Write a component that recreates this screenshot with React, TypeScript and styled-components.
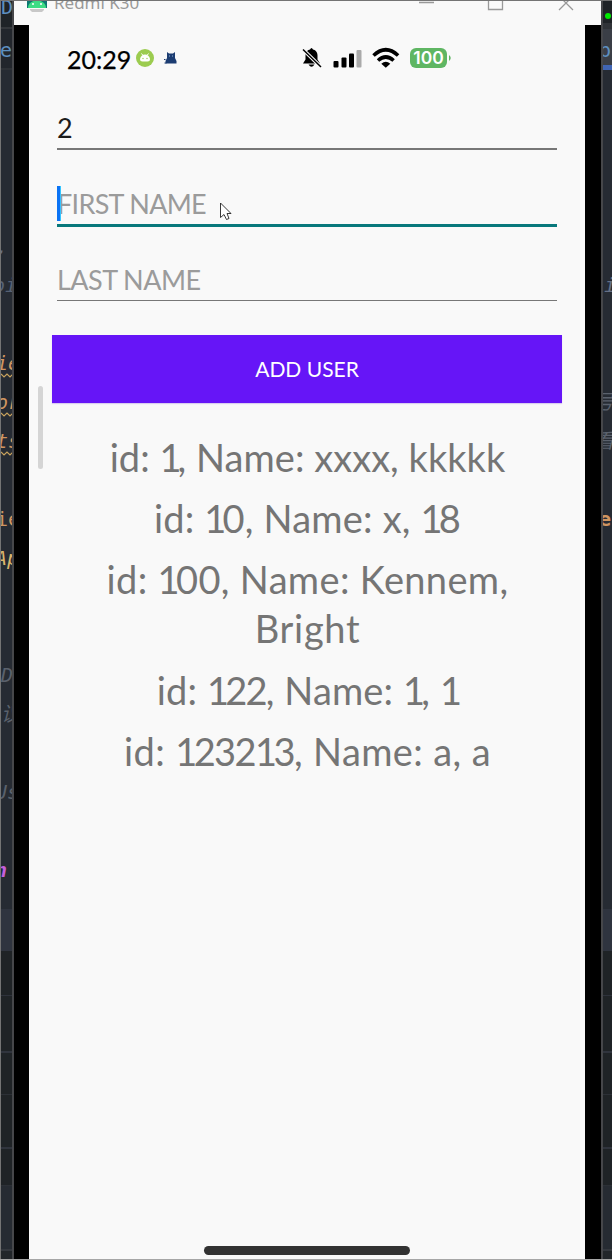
import React from 'react';
import styled, { createGlobalStyle } from 'styled-components';

const Global = createGlobalStyle`
  * { box-sizing: border-box; }
  html, body { margin: 0; background: #252a33; }
  body { font-family: Lato, "Noto Sans", "Noto Sans CJK SC", sans-serif; overflow: hidden; }
`;

const Screen = styled.div`
  display: grid;
  grid-template-columns: 14px 587px 11px;
  width: 612px;
  height: 1260px;
  overflow: hidden;
  border-top: 1px solid #747474;
  border-bottom: 1px solid #a6a6a6;
`;

const Editor = styled.div<{ $side: 'left' | 'right' }>`
  display: flex;
  flex-direction: column;
  height: 1258px;
  overflow: hidden;
  background: #262b33;
  border-left: ${p => (p.$side === 'left' ? '1px solid #747474' : '2px solid #46474a')};
  border-right: ${p => (p.$side === 'left' ? '2px solid #46474a' : '0')};
`;

const Band = styled.div<{ $h: number; $bg: string; $line?: string; $lineW?: number; $top?: number; $bottom?: number }>`
  display: flex;
  align-items: center;
  flex: none;
  height: ${p => p.$h}px;
  padding: ${p => p.$top || 0}px 0 ${p => p.$bottom || 0}px;
  overflow: hidden;
  background: ${p => p.$bg};
  border-bottom: ${p => (p.$line ? `${p.$lineW || 2}px solid ${p.$line}` : '0')};
`;

const CodeArea = styled.div`
  flex: none;
  height: 839px;
  overflow: hidden;
`;

const CodeLine = styled.div`
  display: flex;
  flex-direction: column;
  justify-content: center;
  height: 39px;
  overflow: hidden;
`;

const Code = styled.span<{ $shift: number; $c: string; $italic?: boolean; $bold?: boolean }>`
  margin-left: ${p => p.$shift}px;
  color: ${p => p.$c};
  font: ${p => (p.$italic ? 'italic' : 'normal')} ${p => (p.$bold ? 700 : 400)} 20px/26px "DejaVu Sans Mono", "Noto Sans CJK SC", monospace;
  white-space: pre;
`;

const Squiggle = styled.svg`
  display: block;
  margin: -3px 0 -2px;
`;

const StatusDot = styled.i`
  width: 6px;
  height: 6px;
  margin: 8px 0 0 2px;
  border-radius: 50%;
  background: #00ea00;
`;

const Phone = styled.div`
  display: flex;
  flex-direction: column;
  height: 1258px;
  background: #f9f9f9;
`;

const TitleBar = styled.div`
  display: flex;
  align-items: flex-start;
  height: 24px;
  padding-left: 12px;
  overflow: hidden;
`;

const Title = styled.div`
  margin: -8px 0 0 7px;
  width: 364px;
  color: #999;
  font: 17px/20px "Noto Sans", sans-serif;
`;

const Bezel = styled.div`
  position: relative;
  flex: 1;
  display: flex;
  flex-direction: column;
  border: solid #000;
  border-width: 0 16px 0 15px;
`;

const StatusBar = styled.div`
  display: flex;
  align-items: center;
  height: 90px;
  padding: 0 0 24px 38px;
`;

const Clock = styled.div`
  width: 69px;
  padding-top: 1px;
  color: #000;
  font: 400 25px/30px Lato, sans-serif;
  -webkit-text-stroke: 0.25px #000;
`;

const AppIcons = styled.svg`
  margin-right: 120px;
`;

const Form = styled.div`
  display: flex;
  flex-direction: column;
  padding: 0 28px;
`;

const Field = styled.div<{ $h: number; $line: string; $w: number; $filled?: boolean; $ls?: number }>`
  position: relative;
  display: flex;
  align-items: flex-end;
  height: ${p => p.$h}px;
  padding-bottom: 4px;
  border-bottom: ${p => p.$w}px solid ${p => p.$line};
  color: ${p => (p.$filled ? '#1c1c1c' : '#9b9b9b')};
  font-size: 27px;
  line-height: 32px;
  letter-spacing: ${p => p.$ls || 0}px;
`;

const Caret = styled.i`
  position: absolute;
  left: 0;
  bottom: 3px;
  width: 4px;
  height: 35px;
  background: linear-gradient(90deg, #0a73f5 75%, #35c5ff 75%);
`;

const Button = styled.button`
  margin: 34px -5px 0;
  height: 68px;
  border: 0;
  padding: 0;
  background: #6615f7;
  box-shadow: 0 1px 1px #d9cdf0;
  color: #fff;
  font: 21px/24px Lato, sans-serif;
`;

const List = styled.div`
  display: flex;
  flex-direction: column;
  gap: 12.2px;
  padding: 30px 50px 0 51px;
  color: #757575;
`;

const Row = styled.div`
  font-size: 38px;
  line-height: 49px;
  text-align: center;
`;

const Line = styled.div<{ $ls: number }>`
  letter-spacing: ${p => p.$ls}px;
`;

const Digit = styled.span<{ $tight: number }>`
  margin-right: -${p => p.$tight}px;
`;

const ScrollThumb = styled.div`
  position: absolute;
  left: 9px;
  top: 361px;
  width: 5px;
  height: 83px;
  border-radius: 3px;
  background: #d5d5d5;
`;

const HomeBar = styled.div`
  width: 206px;
  height: 9px;
  margin: auto 0 4px 175px;
  border-radius: 5px;
  background: #323232;
`;

const Pointer = styled.svg`
  position: absolute;
  left: 191px;
  top: 177px;
`;

const BLUE = '#5d8fc0';
const ORANGE = '#d09661';
const GREY = '#5a616c';

type Token = { text: string; shift: number; color: string; upright?: boolean; bold?: boolean; wavy?: boolean };

const leftCode: Record<number, Token> = {
  4: { text: ',', shift: -5, color: '#657086' },
  5: { text: 'oi', shift: -8, color: '#566174' },
  7: { text: 'ie', shift: -5, color: ORANGE, wavy: true },
  8: { text: 'or', shift: -5, color: ORANGE, wavy: true },
  9: { text: 'ts', shift: -5, color: ORANGE, wavy: true },
  11: { text: 'ie', shift: -5, color: ORANGE, upright: true },
  12: { text: 'Ap', shift: -6, color: '#d9b66d' },
  15: { text: 'D', shift: 0, color: GREY },
  16: { text: '议', shift: 0, color: GREY },
  18: { text: 'Us', shift: -6, color: GREY },
  20: { text: 'n', shift: -6, color: '#c45fdc', bold: true },
};

const rightCode: Record<number, Token> = {
  5: { text: 'i', shift: 1, color: '#657086' },
  8: { text: '号', shift: -9, color: GREY },
  9: { text: '看', shift: -9, color: GREY },
  11: { text: 'er', shift: -4, color: ORANGE, upright: true, bold: true },
};

const Source = ({ code }: { code: Record<number, Token> }) => (
  <CodeArea>
    {Array.from({ length: 22 }, (_, i) => {
      const t = code[i];
      return (
        <CodeLine key={i}>
          {t && <Code $shift={t.shift} $c={t.color} $italic={!t.upright} $bold={t.bold}>{t.text}</Code>}
          {t?.wavy && (
            <Squiggle width="12" height="5" fill="none" stroke="#c9a35d" strokeWidth="1.2">
              <path d="M0 1l3 3 3-3 3 3 3-3" />
            </Squiggle>
          )}
        </CodeLine>
      );
    })}
  </CodeArea>
);

const lowerBands: [number, string, string?, number?][] = [
  [42, '#2f343f'],
  [45, '#1f2326', '#2e323b', 1],
  [57, '#1f2326', '#30343d', 2],
  [42, '#1f2326', '#2c3036', 1],
  [54, '#1f2326', '#30343d', 2],
  [37, '#1f2326', '#2c3036', 1],
  [65, '#262b32', '#34383e', 2],
  [20, '#22262a'],
];

const Tools = () => (
  <>{lowerBands.map(([h, bg, line, w], i) => <Band key={i} $h={h} $bg={bg} $line={line} $lineW={w} />)}</>
);

const rows: [string, number][][] = [
  [['id: 1, Name: xxxx, kkkkk', 0.05]],
  [['id: 10, Name: x, 18', 0.2]],
  [['id: 100, Name: Kennem,', 0.35], ['Bright', 0.7]],
  [['id: 122, Name: 1, 1', 0.15]],
  [['id: 123213, Name: a, a', 0.4]],
];

const spell = (text: string) =>
  text.split(/([123])/).map((part, i) =>
    /^[123]$/.test(part) ? <Digit key={i} $tight={part === '1' ? 4 : 2}>{part}</Digit> : part,
  );

export default function App() {
  return (
    <Screen>
      <Global />
      <Editor $side="left">
        <Band $h={28} $bg="#1f2327" $line="#34373b" $bottom={14}><Code $shift={0} $c={BLUE}>D</Code></Band>
        <Band $h={41} $bg="#22262c" $line="#2e3237" $top={3}><Code $shift={-1} $c={BLUE}>er</Code></Band>
        <Source code={leftCode} />
        <Tools />
      </Editor>
      <Phone>
        <TitleBar>
          <svg width="21" height="12">
            <path d="M1 0h20v7H1z" fill="#0d7772" />
            <path d="M2 7c0-10 18-10 18 0z" fill="#3ddc84" />
            <circle cx="7" cy="3" r="1" fill="#fff" /><circle cx="15" cy="3" r="1" fill="#fff" />
            <path d="M4 8h14v1l-2 2H6l-2-2z" fill="#c8c8c8" />
          </svg>
          <Title>Redmi K30</Title>
          <svg width="170" height="11" fill="none" stroke="#999" strokeWidth="1.3">
            <path d="M1 1.500h15M70.500 -3v11.500h14V-3M141 9L155 -5M155 9L141 -5" />
          </svg>
        </TitleBar>
        <Bezel>
          <StatusBar>
            <Clock>20:29</Clock>
            <AppIcons width="46" height="20">
              <circle cx="9" cy="10" r="9" fill="#9ccc50" />
              <path d="M5.500 5.500l1.500 2M12.500 5.500l-1.500 2" stroke="#fff" strokeWidth="1" />
              <path d="M4 11q1-4.500 5-4.500t5 4.500q0 2.500-2.500 2.500h-5Q4 13.500 4 11z" fill="#fff" />
              <circle cx="7" cy="10.500" r=".7" fill="#9ccc50" /><circle cx="11" cy="10.500" r=".7" fill="#9ccc50" />
              <path d="M31 4l2 1.500h4l2-1.500v6l1.500 3v2.500H29.500v-2.500L31 10z" fill="#1c3d72" />
              <path d="M28 11.500h1.500M28.500 15h2" stroke="#1c3d72" strokeWidth="1.200" />
              <path d="M33 8h1M36 8h1" stroke="#8fb4d8" strokeWidth="1" />
            </AppIcons>
            <svg width="152" height="24">
              <path d="M1 17.500l2.500-4V9.500C3.500 5.500 6 4 8 3.500q1.500-3 3 0c2 .500 4.500 2 4.500 6v4l2.500 4zM6.500 18.500h6q-3 4.500-6 0z" fill="#000" />
              <path d="M1 3.500l18 17.500" stroke="#f9f9f9" strokeWidth="3.600" />
              <path d="M1 3.500l18 17.500" stroke="#000" strokeWidth="1.500" />
              <g fill="#000"><rect x="31.500" y="15" width="5" height="6.500" rx="1" /><rect x="39.500" y="11.500" width="5" height="10" rx="1" /><rect x="47" y="7.500" width="5" height="14" rx="1" /></g>
              <rect x="54.500" y="4" width="5" height="17.500" rx="1" fill="#aaa" />
              <g fill="none" stroke="#000" strokeWidth="3.600"><path d="M71.500 9.500q12.300-11.500 24.600 0M76 14.500q7.800-7 15.600 0" /></g>
              <path d="M79.300 17.700q4.500-4 9 0l-4.500 4z" />
              <rect x="108" y="2" width="37" height="20" rx="6" fill="#5fb663" />
              <path d="M147 9q3.500 3 0 6z" fill="#5fb663" />
              <text x="126.500" y="18.300" textAnchor="middle" fill="#fff" fontFamily="Inter, sans-serif" fontSize="17.500" fontWeight="600">100</text>
            </svg>
          </StatusBar>
          <Form>
            <Field $h={35} $line="#777" $w={2} $filled>2</Field>
            <Field $h={77} $line="#08787c" $w={3} $ls={-0.7}>FIRST NAME<Caret /></Field>
            <Field $h={74} $line="#777" $w={1} $ls={-0.55}>LAST NAME</Field>
            <Button>ADD USER</Button>
          </Form>
          <List>
            {rows.map((lines, i) => (
              <Row key={i}>
                {lines.map(([text, ls]) => <Line key={text} $ls={ls}>{spell(text)}</Line>)}
              </Row>
            ))}
          </List>
          <HomeBar />
          <ScrollThumb />
          <Pointer width="13" height="19" viewBox="0 0 13 19">
            <path d="M.5 1v14.500l3.500-3 2.500 5 2.500-1-2-5h4z" fill="#fff" stroke="#222" strokeWidth=".9" />
          </Pointer>
        </Bezel>
      </Phone>
      <Editor $side="right">
        <Band $h={28} $bg="#1f2327" $line="#303338" $lineW={6}><StatusDot /></Band>
        <Band $h={41} $bg="#3a3e46" $line="#4065b4" $lineW={5} $top={5}><Code $shift={-4} $c={BLUE}>p</Code></Band>
        <Source code={rightCode} />
        <Tools />
      </Editor>
    </Screen>
  );
}
